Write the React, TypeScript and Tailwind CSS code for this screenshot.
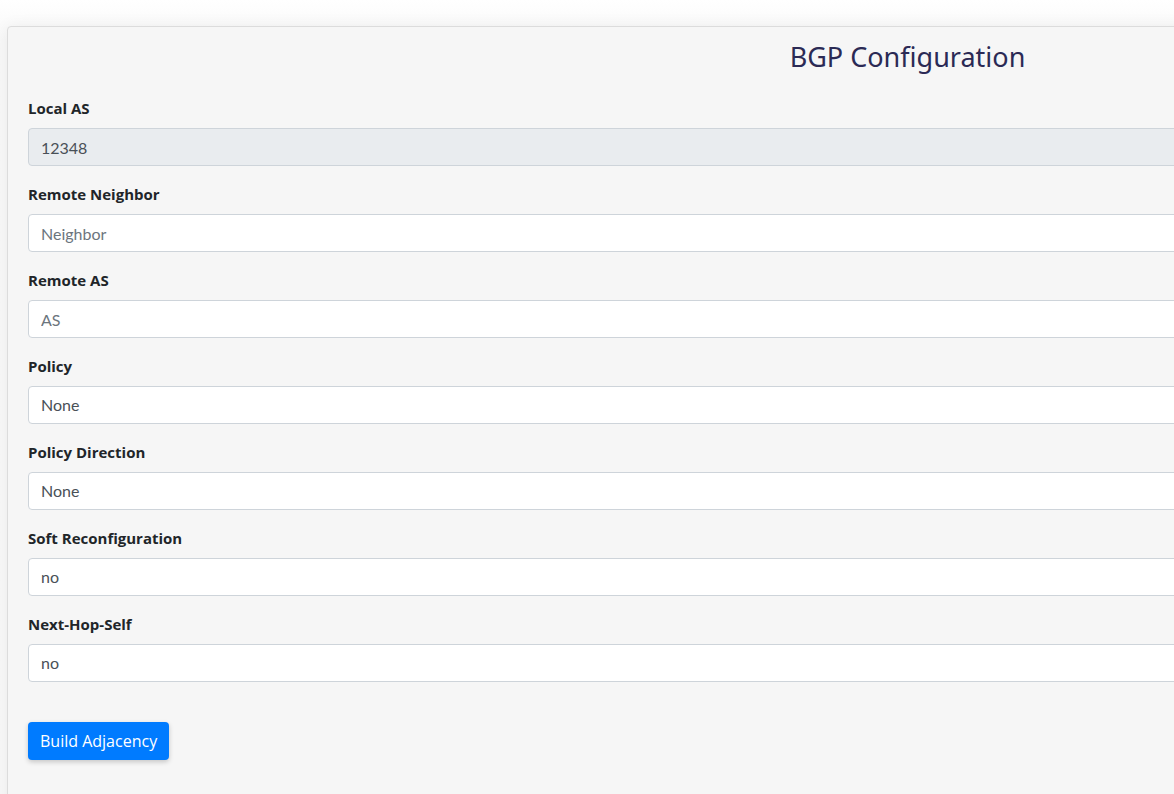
import React from 'react';

const fieldClass =
  "block w-full h-[38px] px-3 rounded-[4px] border border-[#ced4da] bg-white text-[16px] text-[#495057] outline-none appearance-none";

const Label: React.FC<{ children: React.ReactNode }> = ({ children }) => (
  <label className="block mb-2 text-[15px] leading-6 font-bold text-[#212529] font-['Open_Sans',sans-serif]">
    {children}
  </label>
);

export default function App() {
  const selects = [
    { label: 'Policy', value: 'None' },
    { label: 'Policy Direction', value: 'None' },
    { label: 'Soft Reconfiguration', value: 'no' },
    { label: 'Next-Hop-Self', value: 'no' },
  ];

  return (
    <div className="min-h-[794px] w-[1174px] overflow-hidden bg-gradient-to-b from-white to-[#f8f8f8] to-[40px] pt-[26px] pl-[7px] font-['Lato','Noto_Sans',sans-serif]">
      <div className="w-[1801px] min-h-[800px] rounded-[4px] border border-[#dcdcdc] bg-[#f6f6f6] px-5 pt-[11px] shadow-[0_0_16px_rgba(0,0,0,0.06)]">
        <h2 className="text-center text-[27px] leading-[38px] text-[#2b2a55] mb-[20px] font-['Noto_Sans',sans-serif]">
          BGP Configuration
        </h2>

        {/* Local AS is read-only */}
        <div className="mb-4">
          <Label>Local AS</Label>
          <input readOnly value="12348" className={fieldClass + " !bg-[#e9ecef] text-[15px]"} />
        </div>

        <div className="mb-4">
          <Label>Remote Neighbor</Label>
          <input placeholder="Neighbor" className={fieldClass + " placeholder:text-[#6c757d]"} />
        </div>

        <div className="mb-4">
          <Label>Remote AS</Label>
          <input placeholder="AS" className={fieldClass + " placeholder:text-[#6c757d]"} />
        </div>

        {selects.map((s) => (
          <div key={s.label} className="mb-4">
            <Label>{s.label}</Label>
            <select defaultValue={s.value} className={fieldClass}>
              <option>{s.value}</option>
            </select>
          </div>
        ))}

        <div className="pt-6">
          <button className="h-[38px] px-3 rounded-[4px] bg-[#007bff] text-white text-[16px] font-['Open_Sans',sans-serif] shadow-[0_2px_5px_rgba(0,0,0,0.2)]">
            Build Adjacency
          </button>
        </div>
      </div>
    </div>
  );
}
